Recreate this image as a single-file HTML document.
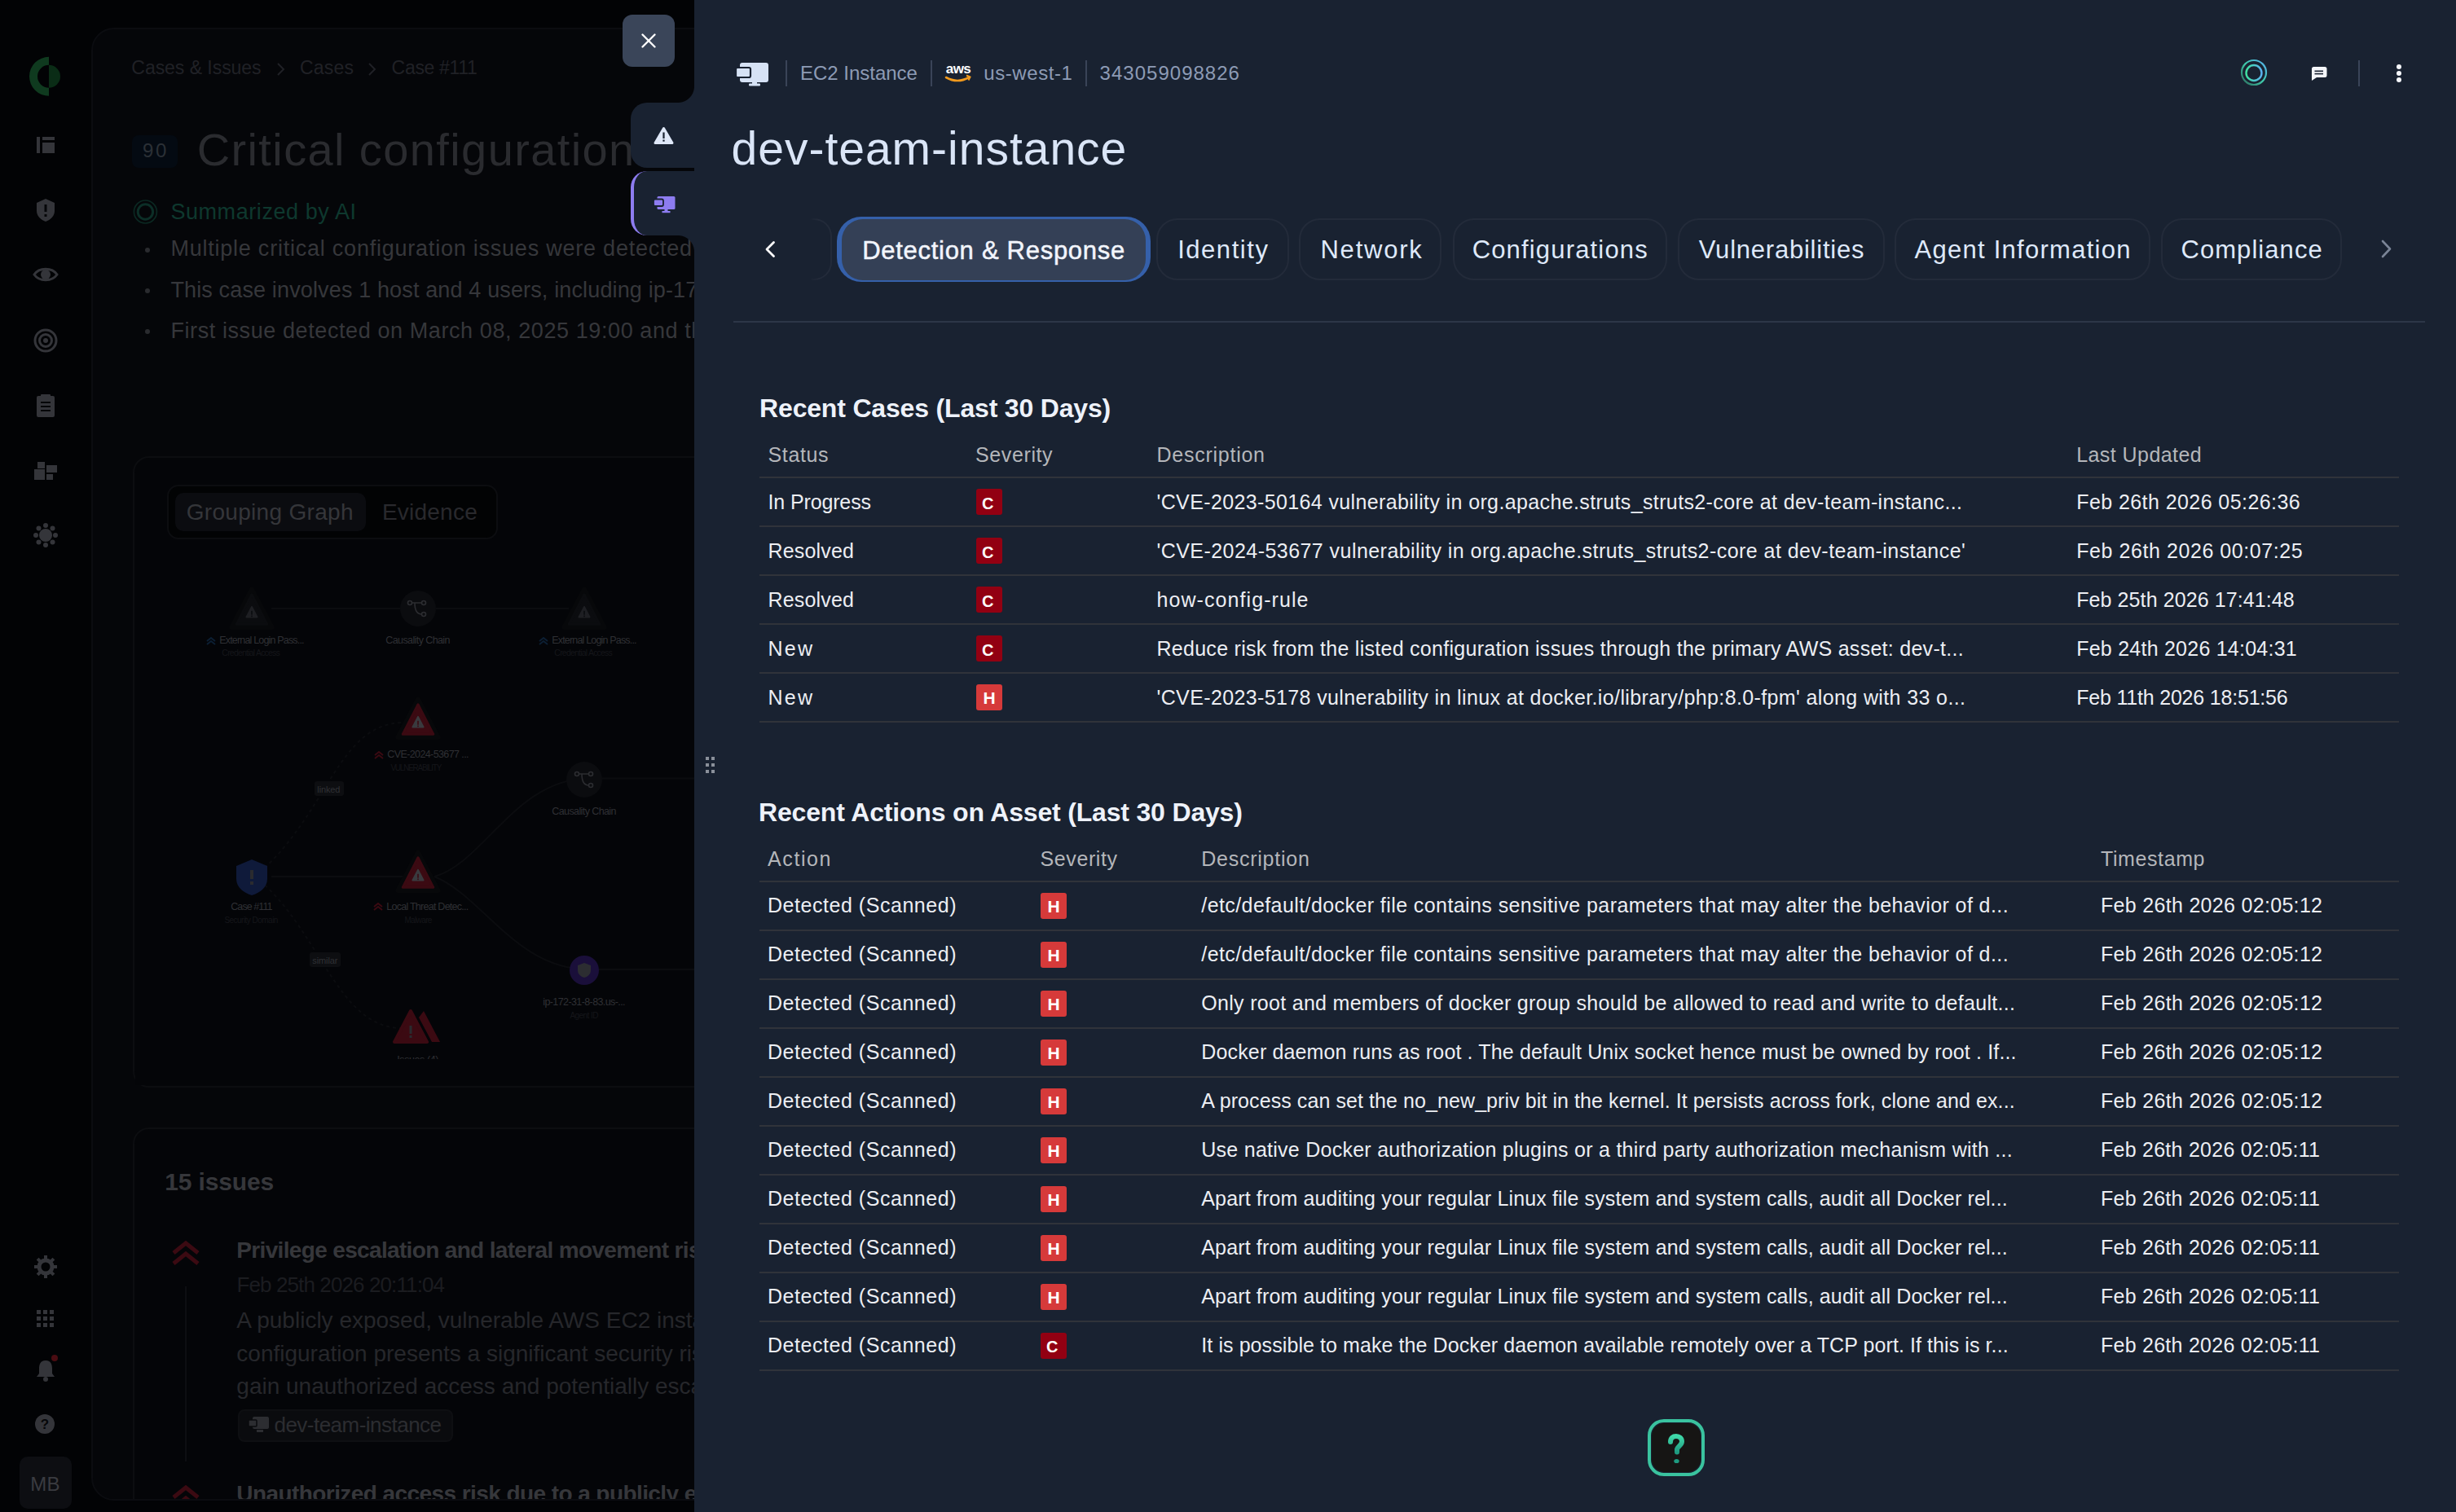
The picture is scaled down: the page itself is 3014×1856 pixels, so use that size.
<!DOCTYPE html>
<html><head><meta charset="utf-8"><style>
html,body{margin:0;padding:0;width:3014px;height:1856px;overflow:hidden;background:#020305;}
body{position:relative;font-family:"Liberation Sans", sans-serif;}
.t{position:absolute;white-space:nowrap;font-family:"Liberation Sans", sans-serif;}
svg{overflow:visible}
</style></head><body>
<svg style="position:absolute;left:34px;top:68px;" width="44" height="52" viewBox="0 0 44 52"><path d="M26 1.8 A24 24 0 0 0 26 49.8 V39.8 A14 14 0 0 1 26 11.8 Z" fill="#0f3a1f"/><path d="M26 11.8 A14 14 0 0 1 26 39.8 Z" fill="#0a2c16"/></svg>
<svg style="position:absolute;left:44px;top:167px;" width="24" height="22" viewBox="0 0 24 22"><rect x="1" y="1" width="4" height="20" fill="#34353a"/><rect x="8" y="1" width="15" height="4" fill="#34353a"/><rect x="8" y="8" width="15" height="13" fill="#34353a"/></svg>
<svg style="position:absolute;left:44px;top:243px;" width="24" height="30" viewBox="0 0 24 30"><path d="M12 1 L23 6 V16 C23 22 18 27 12 29 C6 27 1 22 1 16 V6 Z" fill="#34353a"/><rect x="10.5" y="8" width="3" height="9" fill="#050608"/><rect x="10.5" y="20" width="3" height="3" fill="#050608"/></svg>
<svg style="position:absolute;left:40px;top:326px;" width="32" height="22" viewBox="0 0 32 22"><path d="M2 11 C8 2 24 2 30 11 C24 20 8 20 2 11 Z" fill="none" stroke="#34353a" stroke-width="3"/><circle cx="16" cy="11" r="6" fill="#34353a"/></svg>
<svg style="position:absolute;left:41px;top:403px;" width="30" height="30" viewBox="0 0 30 30"><circle cx="15" cy="15" r="13" fill="none" stroke="#34353a" stroke-width="3"/><circle cx="15" cy="15" r="7.5" fill="none" stroke="#34353a" stroke-width="3"/><circle cx="15" cy="15" r="3" fill="#34353a"/></svg>
<svg style="position:absolute;left:44px;top:483px;" width="24" height="30" viewBox="0 0 24 30"><rect x="1" y="3" width="22" height="26" rx="2" fill="#34353a"/><rect x="6" y="1" width="12" height="5" rx="1" fill="#34353a"/><rect x="6" y="10" width="12" height="2" fill="#050608"/><rect x="6" y="15" width="12" height="2" fill="#050608"/><rect x="6" y="20" width="12" height="2" fill="#050608"/></svg>
<svg style="position:absolute;left:41px;top:566px;" width="30" height="24" viewBox="0 0 30 24"><rect x="5" y="1" width="9" height="8" fill="#34353a"/><rect x="1" y="10" width="13" height="13" fill="#34353a"/><rect x="16" y="5" width="13" height="9" fill="#34353a"/><rect x="16" y="16" width="8" height="7" fill="#34353a"/></svg>
<svg style="position:absolute;left:40px;top:641px;" width="32" height="32" viewBox="0 0 32 32"><circle cx="16" cy="16" r="8" fill="#34353a"/><circle cx="28.0" cy="16.0" r="3" fill="#34353a"/><circle cx="24.5" cy="24.5" r="3" fill="#34353a"/><circle cx="16.0" cy="28.0" r="3" fill="#34353a"/><circle cx="7.5" cy="24.5" r="3" fill="#34353a"/><circle cx="4.0" cy="16.0" r="3" fill="#34353a"/><circle cx="7.5" cy="7.5" r="3" fill="#34353a"/><circle cx="16.0" cy="4.0" r="3" fill="#34353a"/><circle cx="24.5" cy="7.5" r="3" fill="#34353a"/></svg>
<svg style="position:absolute;left:42px;top:1541px;" width="28" height="28" viewBox="0 0 28 28"><circle cx="14" cy="14" r="8" fill="none" stroke="#34353a" stroke-width="5"/><rect x="12" y="0" width="4" height="6" fill="#34353a" transform="rotate(0 14 14)"/><rect x="12" y="0" width="4" height="6" fill="#34353a" transform="rotate(45 14 14)"/><rect x="12" y="0" width="4" height="6" fill="#34353a" transform="rotate(90 14 14)"/><rect x="12" y="0" width="4" height="6" fill="#34353a" transform="rotate(135 14 14)"/><rect x="12" y="0" width="4" height="6" fill="#34353a" transform="rotate(180 14 14)"/><rect x="12" y="0" width="4" height="6" fill="#34353a" transform="rotate(225 14 14)"/><rect x="12" y="0" width="4" height="6" fill="#34353a" transform="rotate(270 14 14)"/><rect x="12" y="0" width="4" height="6" fill="#34353a" transform="rotate(315 14 14)"/></svg>
<svg style="position:absolute;left:44px;top:1607px;" width="24" height="24" viewBox="0 0 24 24"><rect x="1" y="1" width="5" height="5" fill="#34353a"/><rect x="1" y="9" width="5" height="5" fill="#34353a"/><rect x="1" y="17" width="5" height="5" fill="#34353a"/><rect x="9" y="1" width="5" height="5" fill="#34353a"/><rect x="9" y="9" width="5" height="5" fill="#34353a"/><rect x="9" y="17" width="5" height="5" fill="#34353a"/><rect x="17" y="1" width="5" height="5" fill="#34353a"/><rect x="17" y="9" width="5" height="5" fill="#34353a"/><rect x="17" y="17" width="5" height="5" fill="#34353a"/></svg>
<svg style="position:absolute;left:43px;top:1668px;" width="26" height="28" viewBox="0 0 26 28"><path d="M13 2 C6 2 5 8 5 12 V18 L2 22 H24 L21 18 V12 C21 8 20 2 13 2 Z" fill="#34353a"/><circle cx="13" cy="25" r="3" fill="#34353a"/></svg>
<div style="position:absolute;left:63px;top:1663px;width:8px;height:8px;border-radius:50%;background:#4a0c12"></div>
<svg style="position:absolute;left:42px;top:1735px;" width="26" height="26" viewBox="0 0 26 26"><circle cx="13" cy="13" r="12" fill="#34353a"/><text x="13" y="19" font-family="Liberation Sans" font-weight="700" font-size="17" fill="#050608" text-anchor="middle">?</text></svg>
<div style="position:absolute;left:24px;top:1788px;width:64px;height:64px;border-radius:10px;background:#0d0e12"></div>
<div class="t" style="left:37.16px;top:1809.84px;font-size:24px;line-height:24px;color:#3a3b40;font-weight:400;letter-spacing:0.400px;">MB</div>
<div style="position:absolute;left:112px;top:34px;width:900px;height:1808px;border-radius:28px;background:#050609;border:2px solid #0b0c10;box-sizing:border-box"></div>
<div class="t" style="left:161.32px;top:72.38px;font-size:23px;line-height:23px;color:#202126;font-weight:400;letter-spacing:-0.037px;">Cases &amp; Issues</div>
<svg style="position:absolute;left:338px;top:76px;" width="14" height="18" viewBox="0 0 14 18"><path d="M3 2 L10 9 L3 16" fill="none" stroke="#202126" stroke-width="2"/></svg>
<div class="t" style="left:368.12px;top:72.38px;font-size:23px;line-height:23px;color:#202126;font-weight:400;letter-spacing:0.152px;">Cases</div>
<svg style="position:absolute;left:450px;top:76px;" width="14" height="18" viewBox="0 0 14 18"><path d="M3 2 L10 9 L3 16" fill="none" stroke="#202126" stroke-width="2"/></svg>
<div class="t" style="left:480.62px;top:72.38px;font-size:23px;line-height:23px;color:#202126;font-weight:400;letter-spacing:-0.317px;">Case #111</div>
<div style="position:absolute;left:162px;top:166px;width:56px;height:40px;border-radius:8px;background:#040a12"></div>
<div class="t" style="left:175.06px;top:173.34px;font-size:24px;line-height:24px;color:#2b3036;font-weight:400;letter-spacing:2.705px;">90</div>
<div class="t" style="left:241.64px;top:156.16px;font-size:56px;line-height:56px;color:#2a2b2f;font-weight:400;letter-spacing:1.394px;">Critical configuration issues</div>
<svg style="position:absolute;left:162px;top:244px;" width="32" height="32" viewBox="0 0 32 32"><circle cx="16.4" cy="16" r="14" fill="none" stroke="#0b2822" stroke-width="1.7"/><circle cx="16.4" cy="16" r="9.2" fill="none" stroke="#0c2e27" stroke-width="3"/></svg>
<div class="t" style="left:209.38px;top:247.32px;font-size:27px;line-height:27px;color:#0e382e;font-weight:400;letter-spacing:0.575px;">Summarized by AI</div>
<div style="position:absolute;left:177.6px;top:304px;width:6px;height:6px;border-radius:50%;background:#2a2b2f"></div>
<div class="t" style="left:209.38px;top:292.32px;font-size:27px;line-height:27px;color:#36373b;font-weight:400;letter-spacing:0.773px;">Multiple critical configuration issues were detected on the host</div>
<div style="position:absolute;left:177.6px;top:354.2px;width:6px;height:6px;border-radius:50%;background:#2a2b2f"></div>
<div class="t" style="left:209.38px;top:342.52px;font-size:27px;line-height:27px;color:#36373b;font-weight:400;letter-spacing:0.142px;">This case involves 1 host and 4 users, including ip-172-31-8-83</div>
<div style="position:absolute;left:177.6px;top:404.2px;width:6px;height:6px;border-radius:50%;background:#2a2b2f"></div>
<div class="t" style="left:209.38px;top:392.52px;font-size:27px;line-height:27px;color:#36373b;font-weight:400;letter-spacing:0.592px;">First issue detected on March 08, 2025 19:00 and the last</div>
<div style="position:absolute;left:163px;top:560px;width:900px;height:775px;border-radius:20px;border:2px solid #0c0d10;box-sizing:border-box;background:#040508"></div>
<div style="position:absolute;left:205px;top:595px;width:406px;height:67px;border-radius:14px;border:2px solid #0c0d10;box-sizing:border-box;background:#020304"></div>
<div style="position:absolute;left:215px;top:605px;width:234px;height:47px;border-radius:10px;background:#0b0c10"></div>
<div class="t" style="left:228.72px;top:614.78px;font-size:28px;line-height:28px;color:#35363a;font-weight:400;letter-spacing:0.309px;">Grouping Graph</div>
<div class="t" style="left:468.92px;top:614.78px;font-size:28px;line-height:28px;color:#29292d;font-weight:400;letter-spacing:0.231px;">Evidence</div>
<svg style="position:absolute;left:163px;top:700px;" width="689" height="640" viewBox="0 0 689 640">
<g fill="none" stroke="#0b0c0f" stroke-width="2">
<path d="M170 47 H535"/>
<path d="M170 376 H350"/>
<path d="M150 376 C240 300 250 190 330 187" stroke-dasharray="4 4"/>
<path d="M150 376 C230 440 250 562 330 562" stroke-dasharray="4 4"/>
<path d="M370 376 C430 360 470 255.5 560 255.5 H689"/>
<path d="M370 376 C430 400 470 490 560 490 H689"/>
</g></svg>
<svg style="position:absolute;left:283px;top:722px;" width="52" height="52" viewBox="0 0 52 52"><path d="M26 1.3 L50.699999999999996 48.1 H1.3 Z" fill="#07080a" stroke="#07080a" stroke-width="6" stroke-linejoin="round"/><path d="M26 7.8 L44.72 44.199999999999996 H7.280000000000001 Z" fill="#0b0c0f" stroke="#0b0c0f" stroke-width="3" stroke-linejoin="round"/><path d="M26 22.880000000000003 L32.552 35.438 H19.448 Z" fill="#1e1f23" stroke="#1e1f23" stroke-width="2" stroke-linejoin="round"/><rect x="25.2" y="27.794000000000004" width="1.6" height="4.914" fill="#0b0c0f"/><rect x="25.2" y="33.5816" width="1.6" height="1.6" fill="#0b0c0f"/></svg>
<div style="position:absolute;left:491px;top:725px;width:44px;height:44px;border-radius:50%;background:#0b0c0f"></div>
<svg style="position:absolute;left:499px;top:735px;" width="26" height="24" viewBox="0 0 26 24"><g fill="none" stroke="#2c2d31" stroke-width="1.6"><circle cx="4" cy="5" r="2.5"/><circle cx="21" cy="5" r="2.5"/><circle cx="21" cy="19" r="2.5"/><path d="M6.5 5 H18.5 M10 5 C10 14 12 19 18.5 19"/></g></svg>
<svg style="position:absolute;left:691px;top:722px;" width="52" height="52" viewBox="0 0 52 52"><path d="M26 1.3 L50.699999999999996 48.1 H1.3 Z" fill="#07080a" stroke="#07080a" stroke-width="6" stroke-linejoin="round"/><path d="M26 7.8 L44.72 44.199999999999996 H7.280000000000001 Z" fill="#0b0c0f" stroke="#0b0c0f" stroke-width="3" stroke-linejoin="round"/><path d="M26 22.880000000000003 L32.552 35.438 H19.448 Z" fill="#1e1f23" stroke="#1e1f23" stroke-width="2" stroke-linejoin="round"/><rect x="25.2" y="27.794000000000004" width="1.6" height="4.914" fill="#0b0c0f"/><rect x="25.2" y="33.5816" width="1.6" height="1.6" fill="#0b0c0f"/></svg>
<div class="t" style="left:269.25px;top:779.90px;font-size:12.5px;line-height:12.5px;color:#2f3034;font-weight:400;letter-spacing:-0.826px;">External Login Pass...</div>
<div class="t" style="left:272.37px;top:795.88px;font-size:10.5px;line-height:10.5px;color:#15161a;font-weight:400;letter-spacing:-0.786px;">Credential Access</div>
<div class="t" style="left:473.25px;top:779.90px;font-size:12.5px;line-height:12.5px;color:#2f3034;font-weight:400;letter-spacing:-0.592px;">Causality Chain</div>
<div class="t" style="left:677.25px;top:779.90px;font-size:12.5px;line-height:12.5px;color:#2f3034;font-weight:400;letter-spacing:-0.826px;">External Login Pass...</div>
<div class="t" style="left:680.37px;top:795.88px;font-size:10.5px;line-height:10.5px;color:#15161a;font-weight:400;letter-spacing:-0.786px;">Credential Access</div>
<svg style="position:absolute;left:252px;top:780px;" width="14" height="12" viewBox="0 0 14 12"><path d="M2 7 L7 3 L12 7 M2 11 L7 7 L12 11" fill="none" stroke="#0c1f33" stroke-width="2"/></svg>
<svg style="position:absolute;left:660px;top:780px;" width="14" height="12" viewBox="0 0 14 12"><path d="M2 7 L7 3 L12 7 M2 11 L7 7 L12 11" fill="none" stroke="#0c1f33" stroke-width="2"/></svg>
<svg style="position:absolute;left:487px;top:857px;" width="52" height="52" viewBox="0 0 52 52"><path d="M26 1.3 L50.699999999999996 48.1 H1.3 Z" fill="#07080a" stroke="#07080a" stroke-width="6" stroke-linejoin="round"/><path d="M26 7.8 L44.72 44.199999999999996 H7.280000000000001 Z" fill="#3b0a12" stroke="#3b0a12" stroke-width="3" stroke-linejoin="round"/><path d="M26 22.880000000000003 L32.552 35.438 H19.448 Z" fill="#3a3b3f" stroke="#3a3b3f" stroke-width="2" stroke-linejoin="round"/><rect x="25.2" y="27.794000000000004" width="1.6" height="4.914" fill="#3b0a12"/><rect x="25.2" y="33.5816" width="1.6" height="1.6" fill="#3b0a12"/></svg>
<div class="t" style="left:475.25px;top:919.50px;font-size:12.5px;line-height:12.5px;color:#2f3034;font-weight:400;letter-spacing:-0.602px;">CVE-2024-53677 ...</div>
<div class="t" style="left:479.40px;top:937.60px;font-size:10px;line-height:10px;color:#15161a;font-weight:400;letter-spacing:-1.234px;">VULNERABILITY</div>
<svg style="position:absolute;left:458px;top:920px;" width="14" height="12" viewBox="0 0 14 12"><path d="M2 7 L7 3 L12 7 M2 11 L7 7 L12 11" fill="none" stroke="#3b0a12" stroke-width="2"/></svg>
<div style="position:absolute;left:695px;top:935px;width:44px;height:44px;border-radius:50%;background:#0b0c0f"></div>
<svg style="position:absolute;left:704px;top:945px;" width="26" height="24" viewBox="0 0 26 24"><g fill="none" stroke="#2c2d31" stroke-width="1.6"><circle cx="4" cy="5" r="2.5"/><circle cx="21" cy="5" r="2.5"/><circle cx="21" cy="19" r="2.5"/><path d="M6.5 5 H18.5 M10 5 C10 14 12 19 18.5 19"/></g></svg>
<div class="t" style="left:677.25px;top:989.50px;font-size:12.5px;line-height:12.5px;color:#2f3034;font-weight:400;letter-spacing:-0.592px;">Causality Chain</div>
<div style="position:absolute;left:386px;top:959px;width:36px;height:18px;border-radius:3px;background:#0d0e11"></div>
<div class="t" style="left:389.34px;top:963.76px;font-size:11px;line-height:11px;color:#303135;font-weight:400;letter-spacing:-0.128px;">linked</div>
<svg style="position:absolute;left:287px;top:1053px;" width="44" height="48" viewBox="0 0 44 48"><path d="M22 2 L41 10 V26 C41 36 32 43 22 46 C12 43 3 36 3 26 V10 Z" fill="#0f1a3a"/><rect x="20" y="15" width="4" height="11" fill="#2a2b2f"/><rect x="20" y="29" width="4" height="4" fill="#2a2b2f"/></svg>
<div class="t" style="left:283.25px;top:1106.50px;font-size:12.5px;line-height:12.5px;color:#2f3034;font-weight:400;letter-spacing:-0.919px;">Case #111</div>
<div class="t" style="left:275.40px;top:1124.60px;font-size:10px;line-height:10px;color:#15161a;font-weight:400;letter-spacing:-0.526px;">Security Domain</div>
<svg style="position:absolute;left:487px;top:1045px;" width="52" height="52" viewBox="0 0 52 52"><path d="M26 1.3 L50.699999999999996 48.1 H1.3 Z" fill="#07080a" stroke="#07080a" stroke-width="6" stroke-linejoin="round"/><path d="M26 7.8 L44.72 44.199999999999996 H7.280000000000001 Z" fill="#3b0a12" stroke="#3b0a12" stroke-width="3" stroke-linejoin="round"/><path d="M26 22.880000000000003 L32.552 35.438 H19.448 Z" fill="#3a3b3f" stroke="#3a3b3f" stroke-width="2" stroke-linejoin="round"/><rect x="25.2" y="27.794000000000004" width="1.6" height="4.914" fill="#3b0a12"/><rect x="25.2" y="33.5816" width="1.6" height="1.6" fill="#3b0a12"/></svg>
<div class="t" style="left:474.25px;top:1106.50px;font-size:12.5px;line-height:12.5px;color:#2f3034;font-weight:400;letter-spacing:-0.739px;">Local Threat Detec...</div>
<div class="t" style="left:496.40px;top:1124.60px;font-size:10px;line-height:10px;color:#15161a;font-weight:400;letter-spacing:-0.631px;">Malware</div>
<svg style="position:absolute;left:457px;top:1106px;" width="14" height="12" viewBox="0 0 14 12"><path d="M2 7 L7 3 L12 7 M2 11 L7 7 L12 11" fill="none" stroke="#3b0a12" stroke-width="2"/></svg>
<div style="position:absolute;left:380px;top:1169px;width:38px;height:18px;border-radius:3px;background:#0d0e11"></div>
<div class="t" style="left:383.34px;top:1173.76px;font-size:11px;line-height:11px;color:#303135;font-weight:400;letter-spacing:-0.113px;">similar</div>
<div style="position:absolute;left:699px;top:1173px;width:36px;height:36px;border-radius:50%;background:#1a0f3a"></div>
<svg style="position:absolute;left:708px;top:1181px;" width="18" height="20" viewBox="0 0 18 20"><path d="M9 1 L17 4 V10 C17 15 13 18 9 19 C5 18 1 15 1 10 V4 Z" fill="#2c2d31"/></svg>
<div class="t" style="left:666.25px;top:1223.50px;font-size:12.5px;line-height:12.5px;color:#2f3034;font-weight:400;letter-spacing:-0.600px;">ip-172-31-8-83.us-...</div>
<div class="t" style="left:699.40px;top:1241.60px;font-size:10px;line-height:10px;color:#15161a;font-weight:400;letter-spacing:-0.559px;">Agent ID</div>
<svg style="position:absolute;left:482px;top:1237px;" width="60" height="46" viewBox="0 0 60 46"><path d="M22 4 L42 42 H2 Z" fill="#3b0a12" stroke="#3b0a12" stroke-width="4" stroke-linejoin="round"/><path d="M38 4 L58 42 H48 L32 12 Z" fill="#3b0a12"/><rect x="20.5" y="22" width="3" height="10" fill="#2a2b2f"/><rect x="20.5" y="34" width="3" height="3" fill="#2a2b2f"/></svg>
<div class="t" style="left:487.25px;top:1294.50px;font-size:12.5px;line-height:12.5px;color:#2f3034;font-weight:400;letter-spacing:-0.403px;">Issues (4)</div>
<div style="position:absolute;left:166px;top:1300px;width:700px;height:32px;background:#040508"></div>
<div style="position:absolute;left:163px;top:1384px;width:900px;height:700px;border-radius:20px;border:2px solid #0c0d10;box-sizing:border-box;background:#040508"></div>
<div class="t" style="left:202.20px;top:1435.80px;font-size:30px;line-height:30px;color:#36373b;font-weight:700;letter-spacing:-0.138px;">15 issues</div>
<svg style="position:absolute;left:210px;top:1522px;" width="36" height="32" viewBox="0 0 36 32"><path d="M3 16 L18 4 L33 16 M3 29 L18 17 L33 29" fill="none" stroke="#3b0a12" stroke-width="5"/></svg>
<div style="position:absolute;left:227px;top:1579px;width:2px;height:215px;background:#0d0e12"></div>
<div class="t" style="left:290.32px;top:1520.98px;font-size:28px;line-height:28px;color:#36373b;font-weight:700;letter-spacing:-0.658px;">Privilege escalation and lateral movement risk due to</div>
<div class="t" style="left:290.44px;top:1564.16px;font-size:26px;line-height:26px;color:#1b1c20;font-weight:400;letter-spacing:-0.885px;">Feb 25th 2026 20:11:04</div>
<div class="t" style="left:290.32px;top:1607.48px;font-size:28px;line-height:28px;color:#26272b;font-weight:400;letter-spacing:0.000px;">A publicly exposed, vulnerable AWS EC2 instance</div>
<div class="t" style="left:290.32px;top:1648.48px;font-size:28px;line-height:28px;color:#26272b;font-weight:400;letter-spacing:0.000px;">configuration presents a significant security risk</div>
<div class="t" style="left:290.32px;top:1688.28px;font-size:28px;line-height:28px;color:#26272b;font-weight:400;letter-spacing:0.000px;">gain unauthorized access and potentially escalate</div>
<div style="position:absolute;left:292px;top:1730px;width:264px;height:40px;border-radius:8px;border:2px solid #0e0f12;box-sizing:border-box;background:#0a0b0e"></div>
<svg style="position:absolute;left:304px;top:1737px;" width="28" height="24" viewBox="0 0 28 24"><rect x="6" y="2" width="20" height="15" rx="2" fill="#2c2d31"/><rect x="1" y="6" width="10" height="8" rx="1" fill="#2c2d31" stroke="#0a0b0e" stroke-width="1.5"/><rect x="11" y="18" width="8" height="3" fill="#2c2d31"/></svg>
<div class="t" style="left:336.44px;top:1736.16px;font-size:26px;line-height:26px;color:#2c2d31;font-weight:400;letter-spacing:-0.517px;">dev-team-instance</div>
<svg style="position:absolute;left:210px;top:1822px;" width="36" height="32" viewBox="0 0 36 32"><path d="M3 16 L18 4 L33 16 M3 29 L18 17 L33 29" fill="none" stroke="#3b0a12" stroke-width="5"/></svg>
<div class="t" style="left:290.32px;top:1820.48px;font-size:28px;line-height:28px;color:#36373b;font-weight:700;letter-spacing:-0.575px;">Unauthorized access risk due to a publicly exposed</div>
<div style="position:absolute;left:112px;top:1842px;width:760px;height:14px;background:#020305"></div>
<div style="position:absolute;left:140px;top:1840px;width:720px;height:2px;background:#0b0c10"></div>
<div style="position:absolute;left:852px;top:0px;width:2162px;height:1856px;background:#192231"></div>
<div style="position:absolute;left:832px;top:106px;width:20px;height:20px;background:radial-gradient(circle 20px at 0 0, transparent 19.5px, #192231 20.5px)"></div>
<div style="position:absolute;left:774px;top:126px;width:90px;height:79.6px;background:#192231;border-radius:20px 0 0 20px"></div>
<div style="position:absolute;left:774px;top:210px;width:90px;height:79px;background:#192231;border-radius:20px 0 0 20px;border-left:4px solid #8d7cf0;box-sizing:border-box"></div>
<div style="position:absolute;left:832px;top:289px;width:20px;height:20px;background:radial-gradient(circle 20px at 0 100%, transparent 19.5px, #192231 20.5px)"></div>
<div style="position:absolute;left:852px;top:205.6px;width:12px;height:4.4px;background:#192231"></div>
<svg style="position:absolute;left:802px;top:155px;" width="25" height="24" viewBox="0 0 25 24"><path d="M12.5 2.5 L23 20.5 H2 Z" fill="#dfe8f8" stroke="#dfe8f8" stroke-width="3" stroke-linejoin="round"/><rect x="11.4" y="7.5" width="2.2" height="7.5" fill="#192231"/><rect x="11.4" y="16.5" width="2.2" height="2.2" fill="#192231"/></svg>
<svg style="position:absolute;left:801px;top:240px;" width="30" height="24" viewBox="0 0 30 24"><rect x="5.5" y="1" width="22" height="16" rx="1.5" fill="#8d7cf0"/><rect x="1" y="4.5" width="12" height="8.5" rx="2" fill="#8d7cf0" stroke="#192231" stroke-width="1.8"/><rect x="14.5" y="17" width="4" height="3" fill="#8d7cf0"/><rect x="11.5" y="19" width="10" height="2.2" fill="#8d7cf0"/></svg>
<div style="position:absolute;left:764px;top:18px;width:64px;height:64px;border-radius:12px;background:#3a4559"></div>
<svg style="position:absolute;left:764px;top:18px;" width="64" height="64" viewBox="0 0 64 64"><path d="M24.5 24.5 L39.5 39.5 M39.5 24.5 L24.5 39.5" stroke="#ffffff" stroke-width="2.4" stroke-linecap="round"/></svg>
<svg style="position:absolute;left:902px;top:76px;" width="42" height="31" viewBox="0 0 42 31"><rect x="6" y="1" width="35" height="24" rx="3" fill="#d6e2f5"/><rect x="1" y="7" width="18" height="12" rx="2" fill="#d6e2f5" stroke="#192231" stroke-width="2.2"/><rect x="21" y="24" width="6" height="4" fill="#d6e2f5"/><rect x="17" y="26.5" width="14" height="3" rx="1" fill="#d6e2f5"/></svg>
<div style="position:absolute;left:964px;top:74px;width:2px;height:32px;background:#3a4458"></div>
<div style="position:absolute;left:1142px;top:74px;width:2px;height:32px;background:#3a4458"></div>
<div style="position:absolute;left:1332px;top:74px;width:2px;height:32px;background:#3a4458"></div>
<div class="t" style="left:981.96px;top:77.84px;font-size:24px;line-height:24px;color:#8d9bb5;font-weight:400;letter-spacing:-0.007px;">EC2 Instance</div>
<svg style="position:absolute;left:1158px;top:77px;" width="36" height="27" viewBox="0 0 36 27"><text x="18" y="12.5" font-family="Liberation Sans" font-size="17" font-weight="700" fill="#ffffff" text-anchor="middle" letter-spacing="-0.5">aws</text><path d="M3 18 Q17 26 31 18" fill="none" stroke="#f29a1d" stroke-width="2.6" stroke-linecap="round"/><path d="M28 15.5 L32.5 17.5 L30.5 21.5" fill="none" stroke="#f29a1d" stroke-width="2"/></svg>
<div class="t" style="left:1207.26px;top:77.84px;font-size:24px;line-height:24px;color:#8d9bb5;font-weight:400;letter-spacing:0.584px;">us-west-1</div>
<div class="t" style="left:1349.56px;top:77.84px;font-size:24px;line-height:24px;color:#8d9bb5;font-weight:400;letter-spacing:1.021px;">343059098826</div>
<svg style="position:absolute;left:2745px;top:68px;" width="42" height="42" viewBox="0 0 42 42"><defs><linearGradient id="rg" x1="1" y1="0" x2="0" y2="1"><stop offset="0" stop-color="#56aef0"/><stop offset="0.5" stop-color="#3fc7a8"/><stop offset="1" stop-color="#2a6a5a"/></linearGradient><linearGradient id="rg2" x1="0" y1="0" x2="1" y2="0"><stop offset="0" stop-color="#3fe0a0"/><stop offset="1" stop-color="#5ab3f0"/></linearGradient></defs><circle cx="21" cy="21" r="15" fill="none" stroke="url(#rg)" stroke-width="2.2"/><circle cx="21" cy="21.5" r="9.5" fill="none" stroke="url(#rg2)" stroke-width="2.4"/></svg>
<svg style="position:absolute;left:2836px;top:81px;" width="22" height="20" viewBox="0 0 22 20"><path d="M1 3.5 Q1 1 3.5 1 H17 Q19.5 1 19.5 3.5 V11.5 Q19.5 14 17 14 H7 L1 18 Z" fill="#f4f6fa"/><rect x="4.5" y="5.5" width="10.5" height="1.6" fill="#192231"/><rect x="4.5" y="8.8" width="10.5" height="1.6" fill="#192231"/></svg>
<div style="position:absolute;left:2894px;top:74px;width:2px;height:32px;background:#3a4458"></div>
<div style="position:absolute;left:2941px;top:79px;width:6px;height:6px;border-radius:50%;background:#f4f6fa"></div>
<div style="position:absolute;left:2941px;top:87px;width:6px;height:6px;border-radius:50%;background:#f4f6fa"></div>
<div style="position:absolute;left:2941px;top:95px;width:6px;height:6px;border-radius:50%;background:#f4f6fa"></div>
<div class="t" style="left:897.58px;top:154.12px;font-size:57px;line-height:57px;color:#dae5f7;font-weight:400;letter-spacing:0.988px;">dev-team-instance</div>
<div style="position:absolute;left:900px;top:268px;width:121px;height:76px;border-radius:0 22px 22px 0;border:2px solid #232b3a;border-left:none;box-sizing:border-box"></div>
<div style="position:absolute;left:880px;top:258px;width:124px;height:96px;background:linear-gradient(90deg,#192231 0%,#192231 92%,rgba(25,34,49,0) 100%)"></div>
<svg style="position:absolute;left:934px;top:292px;" width="20" height="28" viewBox="0 0 20 28"><path d="M15.5 5.5 L7 14 L15.5 22.5" fill="none" stroke="#ffffff" stroke-width="2.8" stroke-linecap="round" stroke-linejoin="round"/></svg>
<div style="position:absolute;left:1027px;top:266px;width:385px;height:80px;border-radius:30px;background:#3560aa"></div>
<div style="position:absolute;left:1033px;top:268.5px;width:373px;height:75px;border-radius:26px;background:#344056"></div>
<div class="t" style="left:1058.14px;top:291.56px;font-size:31px;line-height:31px;color:#f2f5fc;font-weight:400;letter-spacing:0.718px;-webkit-text-stroke:0.5px #f2f5fc;">Detection &amp; Response</div>
<div style="position:absolute;left:1419px;top:268px;width:162.6px;height:75.5px;border-radius:26px;border:2px solid #232b3a;box-sizing:border-box"></div>
<div class="t" style="left:1445.14px;top:290.96px;font-size:31px;line-height:31px;color:#dfe9fa;font-weight:400;letter-spacing:1.550px;">Identity</div>
<div style="position:absolute;left:1594px;top:268px;width:175px;height:75.5px;border-radius:26px;border:2px solid #232b3a;box-sizing:border-box"></div>
<div class="t" style="left:1620.44px;top:290.96px;font-size:31px;line-height:31px;color:#dfe9fa;font-weight:400;letter-spacing:1.785px;">Network</div>
<div style="position:absolute;left:1783px;top:268px;width:263px;height:75.5px;border-radius:26px;border:2px solid #232b3a;box-sizing:border-box"></div>
<div class="t" style="left:1806.64px;top:290.96px;font-size:31px;line-height:31px;color:#dfe9fa;font-weight:400;letter-spacing:1.170px;">Configurations</div>
<div style="position:absolute;left:2059px;top:268px;width:253.7px;height:75.5px;border-radius:26px;border:2px solid #232b3a;box-sizing:border-box"></div>
<div class="t" style="left:2084.84px;top:290.96px;font-size:31px;line-height:31px;color:#dfe9fa;font-weight:400;letter-spacing:0.768px;">Vulnerabilities</div>
<div style="position:absolute;left:2325px;top:268px;width:314px;height:75.5px;border-radius:26px;border:2px solid #232b3a;box-sizing:border-box"></div>
<div class="t" style="left:2349.44px;top:290.96px;font-size:31px;line-height:31px;color:#dfe9fa;font-weight:400;letter-spacing:1.275px;">Agent Information</div>
<div style="position:absolute;left:2652px;top:268px;width:222px;height:75.5px;border-radius:26px;border:2px solid #232b3a;box-sizing:border-box"></div>
<div class="t" style="left:2676.44px;top:290.96px;font-size:31px;line-height:31px;color:#dfe9fa;font-weight:400;letter-spacing:1.068px;">Compliance</div>
<svg style="position:absolute;left:2918px;top:292px;" width="20" height="28" viewBox="0 0 20 28"><path d="M6 4 L15 13.5 L6 23" fill="none" stroke="#7a8496" stroke-width="2.6" stroke-linecap="round" stroke-linejoin="round"/></svg>
<div style="position:absolute;left:900px;top:394px;width:2076px;height:2px;background:#2c3647"></div>
<div class="t" style="left:932.08px;top:485.32px;font-size:32px;line-height:32px;color:#eef2fa;font-weight:700;letter-spacing:-0.176px;">Recent Cases (Last 30 Days)</div>
<div class="t" style="left:942.50px;top:546.00px;font-size:25px;line-height:25px;color:#b4b6ba;font-weight:400;letter-spacing:0.645px;">Status</div>
<div class="t" style="left:1197.10px;top:546.00px;font-size:25px;line-height:25px;color:#b4b6ba;font-weight:400;letter-spacing:0.599px;">Severity</div>
<div class="t" style="left:1419.50px;top:546.00px;font-size:25px;line-height:25px;color:#b4b6ba;font-weight:400;letter-spacing:0.745px;">Description</div>
<div class="t" style="left:2548.20px;top:546.00px;font-size:25px;line-height:25px;color:#b4b6ba;font-weight:400;letter-spacing:0.435px;">Last Updated</div>
<div style="position:absolute;left:932px;top:585px;width:2012px;height:2px;background:#30333a"></div>
<div class="t" style="left:942.50px;top:604.30px;font-size:25px;line-height:25px;color:#eceef3;font-weight:400;letter-spacing:-0.133px;">In Progress</div>
<div style="position:absolute;left:1198px;top:600.3px;width:32px;height:32px;border-radius:3px;background:#920012"></div>
<div class="t" style="left:1205.00px;top:607.50px;font-size:20px;line-height:20px;color:#ffffff;font-weight:700;letter-spacing:0.000px;">C</div>
<div class="t" style="left:1419.50px;top:604.30px;font-size:25px;line-height:25px;color:#eceef3;font-weight:400;letter-spacing:0.375px;">'CVE-2023-50164 vulnerability in org.apache.struts_struts2-core at dev-team-instanc...</div>
<div class="t" style="left:2548.20px;top:604.30px;font-size:25px;line-height:25px;color:#eceef3;font-weight:400;letter-spacing:0.428px;">Feb 26th 2026 05:26:36</div>
<div style="position:absolute;left:932px;top:645px;width:2012px;height:2px;background:#30333a"></div>
<div class="t" style="left:942.50px;top:664.30px;font-size:25px;line-height:25px;color:#eceef3;font-weight:400;letter-spacing:0.182px;">Resolved</div>
<div style="position:absolute;left:1198px;top:660.3px;width:32px;height:32px;border-radius:3px;background:#920012"></div>
<div class="t" style="left:1205.00px;top:667.50px;font-size:20px;line-height:20px;color:#ffffff;font-weight:700;letter-spacing:0.000px;">C</div>
<div class="t" style="left:1419.50px;top:664.30px;font-size:25px;line-height:25px;color:#eceef3;font-weight:400;letter-spacing:0.450px;">'CVE-2024-53677 vulnerability in org.apache.struts_struts2-core at dev-team-instance'</div>
<div class="t" style="left:2548.20px;top:664.30px;font-size:25px;line-height:25px;color:#eceef3;font-weight:400;letter-spacing:0.571px;">Feb 26th 2026 00:07:25</div>
<div style="position:absolute;left:932px;top:705px;width:2012px;height:2px;background:#30333a"></div>
<div class="t" style="left:942.50px;top:724.30px;font-size:25px;line-height:25px;color:#eceef3;font-weight:400;letter-spacing:0.182px;">Resolved</div>
<div style="position:absolute;left:1198px;top:720.3px;width:32px;height:32px;border-radius:3px;background:#920012"></div>
<div class="t" style="left:1205.00px;top:727.50px;font-size:20px;line-height:20px;color:#ffffff;font-weight:700;letter-spacing:0.000px;">C</div>
<div class="t" style="left:1419.50px;top:724.30px;font-size:25px;line-height:25px;color:#eceef3;font-weight:400;letter-spacing:1.078px;">how-config-rule</div>
<div class="t" style="left:2548.20px;top:724.30px;font-size:25px;line-height:25px;color:#eceef3;font-weight:400;letter-spacing:0.095px;">Feb 25th 2026 17:41:48</div>
<div style="position:absolute;left:932px;top:765px;width:2012px;height:2px;background:#30333a"></div>
<div class="t" style="left:942.50px;top:784.30px;font-size:25px;line-height:25px;color:#eceef3;font-weight:400;letter-spacing:2.244px;">New</div>
<div style="position:absolute;left:1198px;top:780.3px;width:32px;height:32px;border-radius:3px;background:#920012"></div>
<div class="t" style="left:1205.00px;top:787.50px;font-size:20px;line-height:20px;color:#ffffff;font-weight:700;letter-spacing:0.000px;">C</div>
<div class="t" style="left:1419.50px;top:784.30px;font-size:25px;line-height:25px;color:#eceef3;font-weight:400;letter-spacing:0.275px;">Reduce risk from the listed configuration issues through the primary AWS asset: dev-t...</div>
<div class="t" style="left:2548.20px;top:784.30px;font-size:25px;line-height:25px;color:#eceef3;font-weight:400;letter-spacing:0.238px;">Feb 24th 2026 14:04:31</div>
<div style="position:absolute;left:932px;top:825px;width:2012px;height:2px;background:#30333a"></div>
<div class="t" style="left:942.50px;top:844.30px;font-size:25px;line-height:25px;color:#eceef3;font-weight:400;letter-spacing:2.244px;">New</div>
<div style="position:absolute;left:1198px;top:840.3px;width:32px;height:32px;border-radius:3px;background:#d63a3a"></div>
<div class="t" style="left:1206.53px;top:846.16px;font-size:21px;line-height:21px;color:#ffffff;font-weight:700;letter-spacing:0.000px;">H</div>
<div class="t" style="left:1419.50px;top:844.30px;font-size:25px;line-height:25px;color:#eceef3;font-weight:400;letter-spacing:0.380px;">'CVE-2023-5178 vulnerability in linux at docker.io/library/php:8.0-fpm' along with 33 o...</div>
<div class="t" style="left:2548.20px;top:844.30px;font-size:25px;line-height:25px;color:#eceef3;font-weight:400;letter-spacing:-0.197px;">Feb 11th 2026 18:51:56</div>
<div style="position:absolute;left:932px;top:885px;width:2012px;height:2px;background:#30333a"></div>
<div style="position:absolute;left:866px;top:929px;width:4px;height:4px;background:#8a909a"></div>
<div style="position:absolute;left:866px;top:937px;width:4px;height:4px;background:#8a909a"></div>
<div style="position:absolute;left:866px;top:945px;width:4px;height:4px;background:#8a909a"></div>
<div style="position:absolute;left:873px;top:929px;width:4px;height:4px;background:#8a909a"></div>
<div style="position:absolute;left:873px;top:937px;width:4px;height:4px;background:#8a909a"></div>
<div style="position:absolute;left:873px;top:945px;width:4px;height:4px;background:#8a909a"></div>
<div class="t" style="left:931.08px;top:981.12px;font-size:32px;line-height:32px;color:#eef2fa;font-weight:700;letter-spacing:-0.180px;">Recent Actions on Asset (Last 30 Days)</div>
<div class="t" style="left:942.00px;top:1041.70px;font-size:25px;line-height:25px;color:#b4b6ba;font-weight:400;letter-spacing:1.604px;">Action</div>
<div class="t" style="left:1276.50px;top:1041.70px;font-size:25px;line-height:25px;color:#b4b6ba;font-weight:400;letter-spacing:0.599px;">Severity</div>
<div class="t" style="left:1474.30px;top:1041.70px;font-size:25px;line-height:25px;color:#b4b6ba;font-weight:400;letter-spacing:0.745px;">Description</div>
<div class="t" style="left:2578.00px;top:1041.70px;font-size:25px;line-height:25px;color:#b4b6ba;font-weight:400;letter-spacing:0.599px;">Timestamp</div>
<div style="position:absolute;left:932px;top:1081px;width:2012px;height:2px;background:#30333a"></div>
<div class="t" style="left:942.00px;top:1099.00px;font-size:25px;line-height:25px;color:#eceef3;font-weight:400;letter-spacing:0.538px;">Detected (Scanned)</div>
<div style="position:absolute;left:1277px;top:1096px;width:32px;height:32px;border-radius:3px;background:#d63a3a"></div>
<div class="t" style="left:1285.53px;top:1101.86px;font-size:21px;line-height:21px;color:#ffffff;font-weight:700;letter-spacing:0.000px;">H</div>
<div class="t" style="left:1474.30px;top:1099.00px;font-size:25px;line-height:25px;color:#eceef3;font-weight:400;letter-spacing:0.416px;">/etc/default/docker file contains sensitive parameters that may alter the behavior of d...</div>
<div class="t" style="left:2578.00px;top:1099.00px;font-size:25px;line-height:25px;color:#eceef3;font-weight:400;letter-spacing:0.309px;">Feb 26th 2026 02:05:12</div>
<div style="position:absolute;left:932px;top:1141px;width:2012px;height:2px;background:#30333a"></div>
<div class="t" style="left:942.00px;top:1159.00px;font-size:25px;line-height:25px;color:#eceef3;font-weight:400;letter-spacing:0.538px;">Detected (Scanned)</div>
<div style="position:absolute;left:1277px;top:1156px;width:32px;height:32px;border-radius:3px;background:#d63a3a"></div>
<div class="t" style="left:1285.53px;top:1161.86px;font-size:21px;line-height:21px;color:#ffffff;font-weight:700;letter-spacing:0.000px;">H</div>
<div class="t" style="left:1474.30px;top:1159.00px;font-size:25px;line-height:25px;color:#eceef3;font-weight:400;letter-spacing:0.416px;">/etc/default/docker file contains sensitive parameters that may alter the behavior of d...</div>
<div class="t" style="left:2578.00px;top:1159.00px;font-size:25px;line-height:25px;color:#eceef3;font-weight:400;letter-spacing:0.309px;">Feb 26th 2026 02:05:12</div>
<div style="position:absolute;left:932px;top:1201px;width:2012px;height:2px;background:#30333a"></div>
<div class="t" style="left:942.00px;top:1219.00px;font-size:25px;line-height:25px;color:#eceef3;font-weight:400;letter-spacing:0.538px;">Detected (Scanned)</div>
<div style="position:absolute;left:1277px;top:1216px;width:32px;height:32px;border-radius:3px;background:#d63a3a"></div>
<div class="t" style="left:1285.53px;top:1221.86px;font-size:21px;line-height:21px;color:#ffffff;font-weight:700;letter-spacing:0.000px;">H</div>
<div class="t" style="left:1474.30px;top:1219.00px;font-size:25px;line-height:25px;color:#eceef3;font-weight:400;letter-spacing:0.301px;">Only root and members of docker group should be allowed to read and write to default...</div>
<div class="t" style="left:2578.00px;top:1219.00px;font-size:25px;line-height:25px;color:#eceef3;font-weight:400;letter-spacing:0.309px;">Feb 26th 2026 02:05:12</div>
<div style="position:absolute;left:932px;top:1261px;width:2012px;height:2px;background:#30333a"></div>
<div class="t" style="left:942.00px;top:1279.00px;font-size:25px;line-height:25px;color:#eceef3;font-weight:400;letter-spacing:0.538px;">Detected (Scanned)</div>
<div style="position:absolute;left:1277px;top:1276px;width:32px;height:32px;border-radius:3px;background:#d63a3a"></div>
<div class="t" style="left:1285.53px;top:1281.86px;font-size:21px;line-height:21px;color:#ffffff;font-weight:700;letter-spacing:0.000px;">H</div>
<div class="t" style="left:1474.30px;top:1279.00px;font-size:25px;line-height:25px;color:#eceef3;font-weight:400;letter-spacing:0.146px;">Docker daemon runs as root . The default Unix socket hence must be owned by root . If...</div>
<div class="t" style="left:2578.00px;top:1279.00px;font-size:25px;line-height:25px;color:#eceef3;font-weight:400;letter-spacing:0.309px;">Feb 26th 2026 02:05:12</div>
<div style="position:absolute;left:932px;top:1321px;width:2012px;height:2px;background:#30333a"></div>
<div class="t" style="left:942.00px;top:1339.00px;font-size:25px;line-height:25px;color:#eceef3;font-weight:400;letter-spacing:0.538px;">Detected (Scanned)</div>
<div style="position:absolute;left:1277px;top:1336px;width:32px;height:32px;border-radius:3px;background:#d63a3a"></div>
<div class="t" style="left:1285.53px;top:1341.86px;font-size:21px;line-height:21px;color:#ffffff;font-weight:700;letter-spacing:0.000px;">H</div>
<div class="t" style="left:1474.30px;top:1339.00px;font-size:25px;line-height:25px;color:#eceef3;font-weight:400;letter-spacing:0.082px;">A process can set the no_new_priv bit in the kernel. It persists across fork, clone and ex...</div>
<div class="t" style="left:2578.00px;top:1339.00px;font-size:25px;line-height:25px;color:#eceef3;font-weight:400;letter-spacing:0.309px;">Feb 26th 2026 02:05:12</div>
<div style="position:absolute;left:932px;top:1381px;width:2012px;height:2px;background:#30333a"></div>
<div class="t" style="left:942.00px;top:1399.00px;font-size:25px;line-height:25px;color:#eceef3;font-weight:400;letter-spacing:0.538px;">Detected (Scanned)</div>
<div style="position:absolute;left:1277px;top:1396px;width:32px;height:32px;border-radius:3px;background:#d63a3a"></div>
<div class="t" style="left:1285.53px;top:1401.86px;font-size:21px;line-height:21px;color:#ffffff;font-weight:700;letter-spacing:0.000px;">H</div>
<div class="t" style="left:1474.30px;top:1399.00px;font-size:25px;line-height:25px;color:#eceef3;font-weight:400;letter-spacing:0.258px;">Use native Docker authorization plugins or a third party authorization mechanism with ...</div>
<div class="t" style="left:2578.00px;top:1399.00px;font-size:25px;line-height:25px;color:#eceef3;font-weight:400;letter-spacing:0.255px;">Feb 26th 2026 02:05:11</div>
<div style="position:absolute;left:932px;top:1441px;width:2012px;height:2px;background:#30333a"></div>
<div class="t" style="left:942.00px;top:1459.00px;font-size:25px;line-height:25px;color:#eceef3;font-weight:400;letter-spacing:0.538px;">Detected (Scanned)</div>
<div style="position:absolute;left:1277px;top:1456px;width:32px;height:32px;border-radius:3px;background:#d63a3a"></div>
<div class="t" style="left:1285.53px;top:1461.86px;font-size:21px;line-height:21px;color:#ffffff;font-weight:700;letter-spacing:0.000px;">H</div>
<div class="t" style="left:1474.30px;top:1459.00px;font-size:25px;line-height:25px;color:#eceef3;font-weight:400;letter-spacing:0.139px;">Apart from auditing your regular Linux file system and system calls, audit all Docker rel...</div>
<div class="t" style="left:2578.00px;top:1459.00px;font-size:25px;line-height:25px;color:#eceef3;font-weight:400;letter-spacing:0.255px;">Feb 26th 2026 02:05:11</div>
<div style="position:absolute;left:932px;top:1501px;width:2012px;height:2px;background:#30333a"></div>
<div class="t" style="left:942.00px;top:1519.00px;font-size:25px;line-height:25px;color:#eceef3;font-weight:400;letter-spacing:0.538px;">Detected (Scanned)</div>
<div style="position:absolute;left:1277px;top:1516px;width:32px;height:32px;border-radius:3px;background:#d63a3a"></div>
<div class="t" style="left:1285.53px;top:1521.86px;font-size:21px;line-height:21px;color:#ffffff;font-weight:700;letter-spacing:0.000px;">H</div>
<div class="t" style="left:1474.30px;top:1519.00px;font-size:25px;line-height:25px;color:#eceef3;font-weight:400;letter-spacing:0.139px;">Apart from auditing your regular Linux file system and system calls, audit all Docker rel...</div>
<div class="t" style="left:2578.00px;top:1519.00px;font-size:25px;line-height:25px;color:#eceef3;font-weight:400;letter-spacing:0.255px;">Feb 26th 2026 02:05:11</div>
<div style="position:absolute;left:932px;top:1561px;width:2012px;height:2px;background:#30333a"></div>
<div class="t" style="left:942.00px;top:1579.00px;font-size:25px;line-height:25px;color:#eceef3;font-weight:400;letter-spacing:0.538px;">Detected (Scanned)</div>
<div style="position:absolute;left:1277px;top:1576px;width:32px;height:32px;border-radius:3px;background:#d63a3a"></div>
<div class="t" style="left:1285.53px;top:1581.86px;font-size:21px;line-height:21px;color:#ffffff;font-weight:700;letter-spacing:0.000px;">H</div>
<div class="t" style="left:1474.30px;top:1579.00px;font-size:25px;line-height:25px;color:#eceef3;font-weight:400;letter-spacing:0.139px;">Apart from auditing your regular Linux file system and system calls, audit all Docker rel...</div>
<div class="t" style="left:2578.00px;top:1579.00px;font-size:25px;line-height:25px;color:#eceef3;font-weight:400;letter-spacing:0.255px;">Feb 26th 2026 02:05:11</div>
<div style="position:absolute;left:932px;top:1621px;width:2012px;height:2px;background:#30333a"></div>
<div class="t" style="left:942.00px;top:1639.00px;font-size:25px;line-height:25px;color:#eceef3;font-weight:400;letter-spacing:0.538px;">Detected (Scanned)</div>
<div style="position:absolute;left:1277px;top:1636px;width:32px;height:32px;border-radius:3px;background:#920012"></div>
<div class="t" style="left:1284.00px;top:1643.20px;font-size:20px;line-height:20px;color:#ffffff;font-weight:700;letter-spacing:0.000px;">C</div>
<div class="t" style="left:1474.30px;top:1639.00px;font-size:25px;line-height:25px;color:#eceef3;font-weight:400;letter-spacing:0.082px;">It is possible to make the Docker daemon available remotely over a TCP port. If this is r...</div>
<div class="t" style="left:2578.00px;top:1639.00px;font-size:25px;line-height:25px;color:#eceef3;font-weight:400;letter-spacing:0.255px;">Feb 26th 2026 02:05:11</div>
<div style="position:absolute;left:932px;top:1681px;width:2012px;height:2px;background:#30333a"></div>
<div style="position:absolute;left:2022px;top:1742px;width:70px;height:70px;border-radius:20px;border:4px solid #3ac39f;box-sizing:border-box;background:#192231"></div>
<div style="position:absolute;left:2027px;top:1747px;width:60px;height:60px;border-radius:16px;background:#161514"></div>
<svg style="position:absolute;left:2042px;top:1759px;" width="30" height="40" viewBox="0 0 30 40"><defs><linearGradient id="qg" x1="0" y1="0" x2="0" y2="1"><stop offset="0" stop-color="#3fd8a8"/><stop offset="1" stop-color="#1e9a80"/></linearGradient></defs><path d="M8 11 C8 6 11 4 15 4 C19 4 22 6.5 22 10.5 C22 15 17 16.5 16 20 V23.5" fill="none" stroke="url(#qg)" stroke-width="6" stroke-linecap="round"/><ellipse cx="15.5" cy="34.5" rx="3.2" ry="2.6" fill="#1e9a80"/></svg>
</body></html>
